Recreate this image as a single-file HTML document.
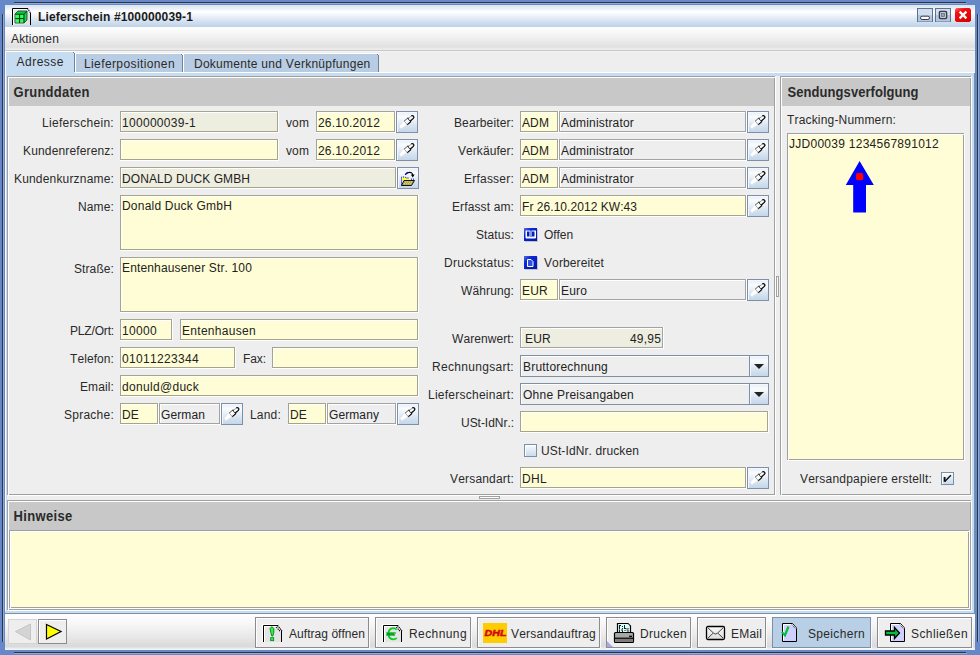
<!DOCTYPE html><html><head><meta charset="utf-8"><style>
html,body{margin:0;padding:0}
body{width:980px;height:655px;position:relative;overflow:hidden;background:#6687c8;font-family:"Liberation Sans",sans-serif}
.a{position:absolute}
.t{position:absolute;white-space:pre;font-family:"Liberation Sans",sans-serif;line-height:normal;font-kerning:none;font-variant-ligatures:none}
</style></head><body>
<div class=a style="left:0px;top:0px;width:980px;height:655px;background:#6687c8"></div>
<div class=a style="left:14px;top:3px;width:953px;height:1px;background:#8fa9dc"></div>
<div class=a style="left:3px;top:14px;width:1px;height:628px;background:#8fa9dc"></div>
<div class=a style="left:978px;top:14px;width:1px;height:628px;background:#8fa9dc"></div>
<div class=a style="left:14px;top:653px;width:953px;height:1px;background:#8fa9dc"></div>
<div class=a style="left:14px;top:2px;width:952px;height:1px;background:#2e3440"></div>
<div class=a style="left:2px;top:14px;width:1px;height:628px;background:#2e3440"></div>
<div class=a style="left:977px;top:14px;width:1px;height:628px;background:#2e3440"></div>
<div class=a style="left:14px;top:652px;width:952px;height:1px;background:#2e3440"></div>
<div class=a style="left:5px;top:5px;width:970px;height:22px;background:linear-gradient(#dae4ef 0px,#e6edf5 3px,#fbfcfe 6px,#ffffff 7px,#e8eff7 12px,#d2e0ef 17px,#bed2e9 22px)"></div>
<div class=t style="left:38.00px;top:10px;font-size:12px;font-weight:bold;letter-spacing:0.143px;color:#1b1b1b;">Lieferschein #100000039-1</div>
<div class=a style="left:5px;top:27px;width:970px;height:23px;background:linear-gradient(#ffffff 0px,#f8f8f8 5px,#ececec 13px,#e0e0e0 20px,#e6e6e6 21px,#f0f0f0 23px)"></div>
<div class=a style="left:5px;top:50px;width:970px;height:1px;background:#c6c6c6"></div>
<div class=t style="left:11.00px;top:32px;font-size:12px;font-weight:normal;letter-spacing:0.163px;color:#2a2a2a;">Aktionen</div>
<div class=a style="left:5px;top:51px;width:970px;height:563px;background:#eeeeee"></div>
<div class=a style="left:5px;top:51px;width:970px;height:1px;background:#f6f6f6"></div>
<div class=a style="left:5px;top:72px;width:970px;height:1px;background:#ffffff"></div>
<div class=a style="left:5px;top:73px;width:969px;height:3px;background:#c6dcf1"></div>
<div class=a style="left:5px;top:72px;width:1px;height:541px;background:#ffffff"></div>
<div class=a style="left:6px;top:73px;width:1px;height:540px;background:#c6dcf1"></div>
<div class=a style="left:972px;top:73px;width:2px;height:540px;background:#c6dcf1"></div>
<div class=a style="left:974px;top:73px;width:1px;height:541px;background:#7890a8"></div>
<div class=a style="left:5px;top:611px;width:969px;height:2px;background:#c6dcf1"></div>
<div class=a style="left:5px;top:613px;width:970px;height:1px;background:#7890a8"></div>
<div class=a style="left:5px;top:51px;width:70px;height:25px;background:#ffffff"></div>
<div class=a style="left:6px;top:52px;width:68px;height:24px;background:#c6dcf1"></div>
<div class=a style="left:74px;top:53px;width:1px;height:19px;background:#6f8197"></div>
<div class=a style="left:73px;top:52px;width:1px;height:1px;background:#6f8197"></div>
<div class=a style="left:74px;top:72px;width:1px;height:4px;background:#c6dcf1"></div>
<div class=t style="left:16.50px;top:55px;font-size:12px;font-weight:normal;letter-spacing:0.497px;color:#2a2a2a;">Adresse</div>
<div class=a style="left:75px;top:53px;width:107px;height:20px;background:#ffffff"></div>
<div class=a style="left:182px;top:72px;width:1px;height:1px;background:#ffffff"></div>
<div class=a style="left:76px;top:54px;width:106px;height:18px;background:#b8cde4"></div>
<div class=a style="left:182px;top:55px;width:1px;height:17px;background:#6f8197"></div>
<div class=a style="left:181px;top:54px;width:1px;height:1px;background:#6f8197"></div>
<div class=t style="left:84.00px;top:57px;font-size:12px;font-weight:normal;letter-spacing:0.392px;color:#2a2a2a;">Lieferpositionen</div>
<div class=a style="left:183px;top:53px;width:195px;height:20px;background:#ffffff"></div>
<div class=a style="left:378px;top:72px;width:1px;height:1px;background:#ffffff"></div>
<div class=a style="left:184px;top:54px;width:194px;height:18px;background:#b8cde4"></div>
<div class=a style="left:378px;top:55px;width:1px;height:17px;background:#6f8197"></div>
<div class=a style="left:377px;top:54px;width:1px;height:1px;background:#6f8197"></div>
<div class=t style="left:194.00px;top:57px;font-size:12px;font-weight:normal;letter-spacing:0.261px;color:#2a2a2a;">Dokumente und Verknüpfungen</div>
<div class=a style="left:7px;top:76px;width:768px;height:419px;border:1px solid #a0a0a0;box-sizing:border-box"></div>
<div class=a style="left:8px;top:77px;width:768px;height:419px;border:1px solid #fff;box-sizing:border-box"></div>
<div class=a style="left:7px;top:76px;width:768px;height:1px;background:#a0a0a0"></div>
<div class=a style="left:7px;top:76px;width:1px;height:419px;background:#a0a0a0"></div>
<div class=a style="left:9px;top:78px;width:765px;height:28px;background:#c8c8c8"></div>
<div class=t style="left:13.60px;top:85px;font-size:13px;font-weight:bold;letter-spacing:0.234px;color:#2a2a2a;transform:scaleY(1.1);transform-origin:0 12px">Grunddaten</div>
<div class=a style="left:780px;top:76px;width:191px;height:419px;border:1px solid #a0a0a0;box-sizing:border-box"></div>
<div class=a style="left:781px;top:77px;width:191px;height:419px;border:1px solid #fff;box-sizing:border-box"></div>
<div class=a style="left:780px;top:76px;width:191px;height:1px;background:#a0a0a0"></div>
<div class=a style="left:780px;top:76px;width:1px;height:419px;background:#a0a0a0"></div>
<div class=a style="left:782px;top:78px;width:188px;height:28px;background:#c8c8c8"></div>
<div class=t style="left:787.60px;top:85px;font-size:13px;font-weight:bold;letter-spacing:0.056px;color:#2a2a2a;transform:scaleY(1.1);transform-origin:0 12px">Sendungsverfolgung</div>
<div class=a style="left:479px;top:496px;width:21px;height:3px;border:1px solid #a0a0a0;box-sizing:border-box;background:#fff"></div>
<div class=a style="left:776px;top:276px;width:3px;height:21px;border:1px solid #a0a0a0;box-sizing:border-box;background:#f8f8f8"></div>
<div class=a style="left:7px;top:500px;width:964px;height:110px;border:1px solid #a0a0a0;box-sizing:border-box"></div>
<div class=a style="left:8px;top:501px;width:964px;height:110px;border:1px solid #fff;box-sizing:border-box"></div>
<div class=a style="left:7px;top:500px;width:964px;height:1px;background:#a0a0a0"></div>
<div class=a style="left:7px;top:500px;width:1px;height:110px;background:#a0a0a0"></div>
<div class=a style="left:9px;top:502px;width:961px;height:28px;background:#c8c8c8"></div>
<div class=t style="left:13.60px;top:509px;font-size:13px;font-weight:bold;letter-spacing:0.331px;color:#2a2a2a;transform:scaleY(1.1);transform-origin:0 12px">Hinweise</div>
<div class=a style="left:9px;top:530px;width:960px;height:78px;border:1px solid #a0a0a0;box-sizing:border-box"></div>
<div class=a style="left:10px;top:531px;width:960px;height:78px;border:1px solid #fff;box-sizing:border-box"></div>
<div class=a style="left:9px;top:530px;width:960px;height:1px;background:#a0a0a0"></div>
<div class=a style="left:9px;top:530px;width:1px;height:78px;background:#a0a0a0"></div>
<div class=a style="left:11px;top:532px;width:957px;height:75px;background:#fffdd6"></div>
<div class=t style="left:42.00px;top:116px;font-size:12px;font-weight:normal;letter-spacing:0.305px;color:#2a2a2a;">Lieferschein:</div>
<div class=t style="left:23.00px;top:144px;font-size:12px;font-weight:normal;letter-spacing:0.151px;color:#2a2a2a;">Kundenreferenz:</div>
<div class=t style="left:14.00px;top:172px;font-size:12px;font-weight:normal;letter-spacing:0.174px;color:#2a2a2a;">Kundenkurzname:</div>
<div class=t style="left:78.00px;top:200px;font-size:12px;font-weight:normal;letter-spacing:0.131px;color:#2a2a2a;">Name:</div>
<div class=t style="left:74.00px;top:262px;font-size:12px;font-weight:normal;letter-spacing:0.093px;color:#2a2a2a;">Straße:</div>
<div class=t style="left:70.00px;top:324px;font-size:12px;font-weight:normal;letter-spacing:-0.167px;color:#2a2a2a;">PLZ/Ort:</div>
<div class=t style="left:70.00px;top:352px;font-size:12px;font-weight:normal;letter-spacing:0.080px;color:#2a2a2a;">Telefon:</div>
<div class=t style="left:80.00px;top:380px;font-size:12px;font-weight:normal;letter-spacing:0.110px;color:#2a2a2a;">Email:</div>
<div class=t style="left:64.00px;top:408px;font-size:12px;font-weight:normal;letter-spacing:0.246px;color:#2a2a2a;">Sprache:</div>
<div class=a style="left:120px;top:111px;width:159px;height:22px;background:#fff"></div>
<div class=a style="left:120px;top:111px;width:158px;height:21px;background:#eeeee0;border:1px solid #a5a58f;box-sizing:border-box;box-shadow:inset 1px 1px 0 #fff"></div>
<div class=t style="left:122.00px;top:116px;font-size:12px;font-weight:normal;letter-spacing:0.297px;color:#222;">100000039-1</div>
<div class=t style="left:286.00px;top:116px;font-size:12px;font-weight:normal;letter-spacing:0.110px;color:#2a2a2a;">vom</div>
<div class=a style="left:316px;top:111px;width:80px;height:22px;background:#fff"></div>
<div class=a style="left:316px;top:111px;width:79px;height:21px;background:#fffdd6;border:1px solid #a5a58f;box-sizing:border-box;box-shadow:inset 1px 1px 0 #fff"></div>
<div class=t style="left:318.00px;top:116px;font-size:12px;font-weight:normal;letter-spacing:0.194px;color:#222;">26.10.2012</div>
<div class=a style="left:396px;top:111px;width:22px;height:22px;box-sizing:border-box;border:1px solid #7d90a9;background:linear-gradient(#e6eef7,#fafcfe 25%,#dde8f3 60%,#c3d6ea);box-shadow:inset 1px 1px 0 #f4f8fc"><svg width="22" height="22" viewBox="0 0 22 22" style="position:absolute;left:-1px;top:-1px">
<g transform="translate(4.2,16.6) rotate(-40.7)">
<path d="M0 -1.4 L7 -2.3 L7 2.3 L0 1.4 Z" fill="#fff"/>
<path d="M0.5 1.4 L7 2.3" stroke="#dcdcdc" stroke-width="0.6"/>
<rect x="7" y="-2.3" width="5" height="4.6" fill="#fcfcfc"/>
<path d="M7 -2.3 L12 -2.3" stroke="#555" stroke-width="0.9"/>
<path d="M7 2.4 L12 2.4" stroke="#000" stroke-width="1.2"/>
<path d="M7.3 -2.3 L7.3 2.3" stroke="#9a9a9a" stroke-width="0.8"/>
<path d="M12 -2.5 L12 2.5" stroke="#000" stroke-width="1.2"/>
<path d="M12 -1.6 L16 -1.6 Q17.5 -1.6 17.5 0 Q17.5 1.6 16 1.6 L12 1.6 Z" fill="#e6e6e6"/>
<rect x="12.5" y="-1" width="3.5" height="1.4" fill="#fff"/>
<path d="M12 -1.6 L16 -1.6" stroke="#333" stroke-width="0.9" stroke-dasharray="1 0.7"/>
<path d="M12 1.6 L16 1.6 Q17.5 1.6 17.5 0 Q17.5 -1.6 16 -1.6" fill="none" stroke="#000" stroke-width="1.2"/>
</g></svg></div>
<div class=a style="left:120px;top:139px;width:159px;height:22px;background:#fff"></div>
<div class=a style="left:120px;top:139px;width:158px;height:21px;background:#fffdd6;border:1px solid #a5a58f;box-sizing:border-box;box-shadow:inset 1px 1px 0 #fff"></div>
<div class=t style="left:286.00px;top:144px;font-size:12px;font-weight:normal;letter-spacing:0.110px;color:#2a2a2a;">vom</div>
<div class=a style="left:316px;top:139px;width:80px;height:22px;background:#fff"></div>
<div class=a style="left:316px;top:139px;width:79px;height:21px;background:#fffdd6;border:1px solid #a5a58f;box-sizing:border-box;box-shadow:inset 1px 1px 0 #fff"></div>
<div class=t style="left:318.00px;top:144px;font-size:12px;font-weight:normal;letter-spacing:0.194px;color:#222;">26.10.2012</div>
<div class=a style="left:396px;top:139px;width:22px;height:22px;box-sizing:border-box;border:1px solid #7d90a9;background:linear-gradient(#e6eef7,#fafcfe 25%,#dde8f3 60%,#c3d6ea);box-shadow:inset 1px 1px 0 #f4f8fc"><svg width="22" height="22" viewBox="0 0 22 22" style="position:absolute;left:-1px;top:-1px">
<g transform="translate(4.2,16.6) rotate(-40.7)">
<path d="M0 -1.4 L7 -2.3 L7 2.3 L0 1.4 Z" fill="#fff"/>
<path d="M0.5 1.4 L7 2.3" stroke="#dcdcdc" stroke-width="0.6"/>
<rect x="7" y="-2.3" width="5" height="4.6" fill="#fcfcfc"/>
<path d="M7 -2.3 L12 -2.3" stroke="#555" stroke-width="0.9"/>
<path d="M7 2.4 L12 2.4" stroke="#000" stroke-width="1.2"/>
<path d="M7.3 -2.3 L7.3 2.3" stroke="#9a9a9a" stroke-width="0.8"/>
<path d="M12 -2.5 L12 2.5" stroke="#000" stroke-width="1.2"/>
<path d="M12 -1.6 L16 -1.6 Q17.5 -1.6 17.5 0 Q17.5 1.6 16 1.6 L12 1.6 Z" fill="#e6e6e6"/>
<rect x="12.5" y="-1" width="3.5" height="1.4" fill="#fff"/>
<path d="M12 -1.6 L16 -1.6" stroke="#333" stroke-width="0.9" stroke-dasharray="1 0.7"/>
<path d="M12 1.6 L16 1.6 Q17.5 1.6 17.5 0 Q17.5 -1.6 16 -1.6" fill="none" stroke="#000" stroke-width="1.2"/>
</g></svg></div>
<div class=a style="left:120px;top:167px;width:277px;height:22px;background:#fff"></div>
<div class=a style="left:120px;top:167px;width:276px;height:21px;background:#eeeee0;border:1px solid #a5a58f;box-sizing:border-box;box-shadow:inset 1px 1px 0 #fff"></div>
<div class=t style="left:122.00px;top:172px;font-size:12px;font-weight:normal;letter-spacing:0.083px;color:#222;">DONALD DUCK GMBH</div>
<div class=a style="left:397px;top:167px;width:22px;height:22px;box-sizing:border-box;border:1px solid #7d90a9;background:linear-gradient(#e6eef7,#fafcfe 25%,#dde8f3 60%,#c3d6ea);box-shadow:inset 1px 1px 0 #f4f8fc"><svg width="22" height="22" viewBox="0 0 22 22" style="position:absolute;left:-1px;top:-1px">
<path d="M8.2 7.8 Q10.5 4.6 14 5.6 Q15.6 6.2 15.8 8.2" fill="none" stroke="#000" stroke-width="1.1"/>
<path d="M8.2 7.8 Q9.4 5.9 11.2 5.4" fill="none" stroke="#0000e0" stroke-width="1.2"/>
<path d="M13.8 7.6 L17.6 7.6 L15.8 10.4 Z" fill="#000"/>
<path d="M4.5 10.2 L8.2 10.2 L9 11 L12 11 L12 13 L4.5 13 Z" fill="#ffff40"/>
<path d="M4.5 18.5 L4.5 10 L8.2 10 L9 11 L12 11" fill="none" stroke="#0000d0" stroke-width="1" stroke-dasharray="1.1 0.9"/>
<path d="M7 13.5 L17.5 13.5 L14.5 18.5 L4.5 18.5 Z" fill="#b0a858" stroke="#000" stroke-width="0.9"/>
<path d="M8 15 L15.5 15 M7 16.8 L14.5 16.8" stroke="#ffff80" stroke-width="0.7" stroke-dasharray="1 1"/>
<path d="M14 12.2 L17 12.2" stroke="#0000d0" stroke-width="1" stroke-dasharray="1 1"/>
</svg></div>
<div class=a style="left:120px;top:195px;width:299px;height:56px;background:#fff"></div>
<div class=a style="left:120px;top:195px;width:298px;height:55px;background:#fffdd6;border:1px solid #a5a58f;box-sizing:border-box;box-shadow:inset 1px 1px 0 #fff"></div>
<div class=t style="left:122.00px;top:199px;font-size:12px;font-weight:normal;letter-spacing:0.206px;color:#222;">Donald Duck GmbH</div>
<div class=a style="left:120px;top:257px;width:299px;height:56px;background:#fff"></div>
<div class=a style="left:120px;top:257px;width:298px;height:55px;background:#fffdd6;border:1px solid #a5a58f;box-sizing:border-box;box-shadow:inset 1px 1px 0 #fff"></div>
<div class=t style="left:122.00px;top:261px;font-size:12px;font-weight:normal;letter-spacing:0.147px;color:#222;">Entenhausener Str. 100</div>
<div class=a style="left:120px;top:319px;width:53px;height:22px;background:#fff"></div>
<div class=a style="left:120px;top:319px;width:52px;height:21px;background:#fffdd6;border:1px solid #a5a58f;box-sizing:border-box;box-shadow:inset 1px 1px 0 #fff"></div>
<div class=t style="left:122.00px;top:324px;font-size:12px;font-weight:normal;letter-spacing:0.326px;color:#222;">10000</div>
<div class=a style="left:180px;top:319px;width:239px;height:22px;background:#fff"></div>
<div class=a style="left:180px;top:319px;width:238px;height:21px;background:#fffdd6;border:1px solid #a5a58f;box-sizing:border-box;box-shadow:inset 1px 1px 0 #fff"></div>
<div class=t style="left:182.00px;top:324px;font-size:12px;font-weight:normal;letter-spacing:0.297px;color:#222;">Entenhausen</div>
<div class=a style="left:120px;top:347px;width:116px;height:22px;background:#fff"></div>
<div class=a style="left:120px;top:347px;width:115px;height:21px;background:#fffdd6;border:1px solid #a5a58f;box-sizing:border-box;box-shadow:inset 1px 1px 0 #fff"></div>
<div class=t style="left:122.00px;top:352px;font-size:12px;font-weight:normal;letter-spacing:0.326px;color:#222;">01011223344</div>
<div class=t style="left:243.00px;top:352px;font-size:12px;font-weight:normal;letter-spacing:-0.084px;color:#2a2a2a;">Fax:</div>
<div class=a style="left:272px;top:347px;width:147px;height:22px;background:#fff"></div>
<div class=a style="left:272px;top:347px;width:146px;height:21px;background:#fffdd6;border:1px solid #a5a58f;box-sizing:border-box;box-shadow:inset 1px 1px 0 #fff"></div>
<div class=a style="left:120px;top:375px;width:299px;height:22px;background:#fff"></div>
<div class=a style="left:120px;top:375px;width:298px;height:21px;background:#fffdd6;border:1px solid #a5a58f;box-sizing:border-box;box-shadow:inset 1px 1px 0 #fff"></div>
<div class=t style="left:122.00px;top:380px;font-size:12px;font-weight:normal;letter-spacing:0.312px;color:#222;">donuld@duck</div>
<div class=a style="left:120px;top:403px;width:39px;height:22px;background:#fff"></div>
<div class=a style="left:120px;top:403px;width:38px;height:21px;background:#fffdd6;border:1px solid #a5a58f;box-sizing:border-box;box-shadow:inset 1px 1px 0 #fff"></div>
<div class=t style="left:122.00px;top:408px;font-size:12px;font-weight:normal;letter-spacing:0.165px;color:#222;">DE</div>
<div class=a style="left:159px;top:403px;width:62px;height:22px;background:#fff"></div>
<div class=a style="left:159px;top:403px;width:61px;height:21px;background:#eeeeee;border:1px solid #a3a3a3;box-sizing:border-box;box-shadow:inset 1px 1px 0 #fff"></div>
<div class=t style="left:161.00px;top:408px;font-size:12px;font-weight:normal;letter-spacing:0.109px;color:#222;">German</div>
<div class=a style="left:221px;top:403px;width:22px;height:22px;box-sizing:border-box;border:1px solid #7d90a9;background:linear-gradient(#e6eef7,#fafcfe 25%,#dde8f3 60%,#c3d6ea);box-shadow:inset 1px 1px 0 #f4f8fc"><svg width="22" height="22" viewBox="0 0 22 22" style="position:absolute;left:-1px;top:-1px">
<g transform="translate(4.2,16.6) rotate(-40.7)">
<path d="M0 -1.4 L7 -2.3 L7 2.3 L0 1.4 Z" fill="#fff"/>
<path d="M0.5 1.4 L7 2.3" stroke="#dcdcdc" stroke-width="0.6"/>
<rect x="7" y="-2.3" width="5" height="4.6" fill="#fcfcfc"/>
<path d="M7 -2.3 L12 -2.3" stroke="#555" stroke-width="0.9"/>
<path d="M7 2.4 L12 2.4" stroke="#000" stroke-width="1.2"/>
<path d="M7.3 -2.3 L7.3 2.3" stroke="#9a9a9a" stroke-width="0.8"/>
<path d="M12 -2.5 L12 2.5" stroke="#000" stroke-width="1.2"/>
<path d="M12 -1.6 L16 -1.6 Q17.5 -1.6 17.5 0 Q17.5 1.6 16 1.6 L12 1.6 Z" fill="#e6e6e6"/>
<rect x="12.5" y="-1" width="3.5" height="1.4" fill="#fff"/>
<path d="M12 -1.6 L16 -1.6" stroke="#333" stroke-width="0.9" stroke-dasharray="1 0.7"/>
<path d="M12 1.6 L16 1.6 Q17.5 1.6 17.5 0 Q17.5 -1.6 16 -1.6" fill="none" stroke="#000" stroke-width="1.2"/>
</g></svg></div>
<div class=t style="left:250.00px;top:408px;font-size:12px;font-weight:normal;letter-spacing:0.194px;color:#2a2a2a;">Land:</div>
<div class=a style="left:288px;top:403px;width:39px;height:22px;background:#fff"></div>
<div class=a style="left:288px;top:403px;width:38px;height:21px;background:#fffdd6;border:1px solid #a5a58f;box-sizing:border-box;box-shadow:inset 1px 1px 0 #fff"></div>
<div class=t style="left:290.00px;top:408px;font-size:12px;font-weight:normal;letter-spacing:0.165px;color:#222;">DE</div>
<div class=a style="left:327px;top:403px;width:70px;height:22px;background:#fff"></div>
<div class=a style="left:327px;top:403px;width:69px;height:21px;background:#eeeeee;border:1px solid #a3a3a3;box-sizing:border-box;box-shadow:inset 1px 1px 0 #fff"></div>
<div class=t style="left:329.00px;top:408px;font-size:12px;font-weight:normal;letter-spacing:0.093px;color:#222;">Germany</div>
<div class=a style="left:397px;top:403px;width:22px;height:22px;box-sizing:border-box;border:1px solid #7d90a9;background:linear-gradient(#e6eef7,#fafcfe 25%,#dde8f3 60%,#c3d6ea);box-shadow:inset 1px 1px 0 #f4f8fc"><svg width="22" height="22" viewBox="0 0 22 22" style="position:absolute;left:-1px;top:-1px">
<g transform="translate(4.2,16.6) rotate(-40.7)">
<path d="M0 -1.4 L7 -2.3 L7 2.3 L0 1.4 Z" fill="#fff"/>
<path d="M0.5 1.4 L7 2.3" stroke="#dcdcdc" stroke-width="0.6"/>
<rect x="7" y="-2.3" width="5" height="4.6" fill="#fcfcfc"/>
<path d="M7 -2.3 L12 -2.3" stroke="#555" stroke-width="0.9"/>
<path d="M7 2.4 L12 2.4" stroke="#000" stroke-width="1.2"/>
<path d="M7.3 -2.3 L7.3 2.3" stroke="#9a9a9a" stroke-width="0.8"/>
<path d="M12 -2.5 L12 2.5" stroke="#000" stroke-width="1.2"/>
<path d="M12 -1.6 L16 -1.6 Q17.5 -1.6 17.5 0 Q17.5 1.6 16 1.6 L12 1.6 Z" fill="#e6e6e6"/>
<rect x="12.5" y="-1" width="3.5" height="1.4" fill="#fff"/>
<path d="M12 -1.6 L16 -1.6" stroke="#333" stroke-width="0.9" stroke-dasharray="1 0.7"/>
<path d="M12 1.6 L16 1.6 Q17.5 1.6 17.5 0 Q17.5 -1.6 16 -1.6" fill="none" stroke="#000" stroke-width="1.2"/>
</g></svg></div>
<div class=t style="left:454.00px;top:116px;font-size:12px;font-weight:normal;letter-spacing:0.118px;color:#2a2a2a;">Bearbeiter:</div>
<div class=t style="left:458.00px;top:144px;font-size:12px;font-weight:normal;letter-spacing:0.064px;color:#2a2a2a;">Verkäufer:</div>
<div class=t style="left:464.00px;top:172px;font-size:12px;font-weight:normal;letter-spacing:0.221px;color:#2a2a2a;">Erfasser:</div>
<div class=t style="left:452.00px;top:200px;font-size:12px;font-weight:normal;letter-spacing:0.120px;color:#2a2a2a;">Erfasst am:</div>
<div class=t style="left:476.00px;top:228px;font-size:12px;font-weight:normal;letter-spacing:0.092px;color:#2a2a2a;">Status:</div>
<div class=t style="left:444.00px;top:256px;font-size:12px;font-weight:normal;letter-spacing:0.276px;color:#2a2a2a;">Druckstatus:</div>
<div class=t style="left:461.00px;top:284px;font-size:12px;font-weight:normal;letter-spacing:0.122px;color:#2a2a2a;">Währung:</div>
<div class=t style="left:452.00px;top:332px;font-size:12px;font-weight:normal;letter-spacing:0.065px;color:#2a2a2a;">Warenwert:</div>
<div class=t style="left:432.00px;top:360px;font-size:12px;font-weight:normal;letter-spacing:0.304px;color:#2a2a2a;">Rechnungsart:</div>
<div class=t style="left:428.00px;top:388px;font-size:12px;font-weight:normal;letter-spacing:0.247px;color:#2a2a2a;">Lieferscheinart:</div>
<div class=t style="left:461.00px;top:416px;font-size:12px;font-weight:normal;letter-spacing:-0.034px;color:#2a2a2a;">USt-IdNr.:</div>
<div class=t style="left:450.00px;top:472px;font-size:12px;font-weight:normal;letter-spacing:0.179px;color:#2a2a2a;">Versandart:</div>
<div class=a style="left:520px;top:111px;width:39px;height:22px;background:#fff"></div>
<div class=a style="left:520px;top:111px;width:38px;height:21px;background:#fffdd6;border:1px solid #a5a58f;box-sizing:border-box;box-shadow:inset 1px 1px 0 #fff"></div>
<div class=t style="left:522.00px;top:116px;font-size:12px;font-weight:normal;letter-spacing:0.111px;color:#222;">ADM</div>
<div class=a style="left:559px;top:111px;width:188px;height:22px;background:#fff"></div>
<div class=a style="left:559px;top:111px;width:187px;height:21px;background:#eeeeee;border:1px solid #a3a3a3;box-sizing:border-box;box-shadow:inset 1px 1px 0 #fff"></div>
<div class=t style="left:561.00px;top:116px;font-size:12px;font-weight:normal;letter-spacing:0.178px;color:#222;">Administrator</div>
<div class=a style="left:747px;top:111px;width:22px;height:22px;box-sizing:border-box;border:1px solid #7d90a9;background:linear-gradient(#e6eef7,#fafcfe 25%,#dde8f3 60%,#c3d6ea);box-shadow:inset 1px 1px 0 #f4f8fc"><svg width="22" height="22" viewBox="0 0 22 22" style="position:absolute;left:-1px;top:-1px">
<g transform="translate(4.2,16.6) rotate(-40.7)">
<path d="M0 -1.4 L7 -2.3 L7 2.3 L0 1.4 Z" fill="#fff"/>
<path d="M0.5 1.4 L7 2.3" stroke="#dcdcdc" stroke-width="0.6"/>
<rect x="7" y="-2.3" width="5" height="4.6" fill="#fcfcfc"/>
<path d="M7 -2.3 L12 -2.3" stroke="#555" stroke-width="0.9"/>
<path d="M7 2.4 L12 2.4" stroke="#000" stroke-width="1.2"/>
<path d="M7.3 -2.3 L7.3 2.3" stroke="#9a9a9a" stroke-width="0.8"/>
<path d="M12 -2.5 L12 2.5" stroke="#000" stroke-width="1.2"/>
<path d="M12 -1.6 L16 -1.6 Q17.5 -1.6 17.5 0 Q17.5 1.6 16 1.6 L12 1.6 Z" fill="#e6e6e6"/>
<rect x="12.5" y="-1" width="3.5" height="1.4" fill="#fff"/>
<path d="M12 -1.6 L16 -1.6" stroke="#333" stroke-width="0.9" stroke-dasharray="1 0.7"/>
<path d="M12 1.6 L16 1.6 Q17.5 1.6 17.5 0 Q17.5 -1.6 16 -1.6" fill="none" stroke="#000" stroke-width="1.2"/>
</g></svg></div>
<div class=a style="left:520px;top:139px;width:39px;height:22px;background:#fff"></div>
<div class=a style="left:520px;top:139px;width:38px;height:21px;background:#fffdd6;border:1px solid #a5a58f;box-sizing:border-box;box-shadow:inset 1px 1px 0 #fff"></div>
<div class=t style="left:522.00px;top:144px;font-size:12px;font-weight:normal;letter-spacing:0.111px;color:#222;">ADM</div>
<div class=a style="left:559px;top:139px;width:188px;height:22px;background:#fff"></div>
<div class=a style="left:559px;top:139px;width:187px;height:21px;background:#eeeeee;border:1px solid #a3a3a3;box-sizing:border-box;box-shadow:inset 1px 1px 0 #fff"></div>
<div class=t style="left:561.00px;top:144px;font-size:12px;font-weight:normal;letter-spacing:0.178px;color:#222;">Administrator</div>
<div class=a style="left:747px;top:139px;width:22px;height:22px;box-sizing:border-box;border:1px solid #7d90a9;background:linear-gradient(#e6eef7,#fafcfe 25%,#dde8f3 60%,#c3d6ea);box-shadow:inset 1px 1px 0 #f4f8fc"><svg width="22" height="22" viewBox="0 0 22 22" style="position:absolute;left:-1px;top:-1px">
<g transform="translate(4.2,16.6) rotate(-40.7)">
<path d="M0 -1.4 L7 -2.3 L7 2.3 L0 1.4 Z" fill="#fff"/>
<path d="M0.5 1.4 L7 2.3" stroke="#dcdcdc" stroke-width="0.6"/>
<rect x="7" y="-2.3" width="5" height="4.6" fill="#fcfcfc"/>
<path d="M7 -2.3 L12 -2.3" stroke="#555" stroke-width="0.9"/>
<path d="M7 2.4 L12 2.4" stroke="#000" stroke-width="1.2"/>
<path d="M7.3 -2.3 L7.3 2.3" stroke="#9a9a9a" stroke-width="0.8"/>
<path d="M12 -2.5 L12 2.5" stroke="#000" stroke-width="1.2"/>
<path d="M12 -1.6 L16 -1.6 Q17.5 -1.6 17.5 0 Q17.5 1.6 16 1.6 L12 1.6 Z" fill="#e6e6e6"/>
<rect x="12.5" y="-1" width="3.5" height="1.4" fill="#fff"/>
<path d="M12 -1.6 L16 -1.6" stroke="#333" stroke-width="0.9" stroke-dasharray="1 0.7"/>
<path d="M12 1.6 L16 1.6 Q17.5 1.6 17.5 0 Q17.5 -1.6 16 -1.6" fill="none" stroke="#000" stroke-width="1.2"/>
</g></svg></div>
<div class=a style="left:520px;top:167px;width:39px;height:22px;background:#fff"></div>
<div class=a style="left:520px;top:167px;width:38px;height:21px;background:#fffdd6;border:1px solid #a5a58f;box-sizing:border-box;box-shadow:inset 1px 1px 0 #fff"></div>
<div class=t style="left:522.00px;top:172px;font-size:12px;font-weight:normal;letter-spacing:0.111px;color:#222;">ADM</div>
<div class=a style="left:559px;top:167px;width:188px;height:22px;background:#fff"></div>
<div class=a style="left:559px;top:167px;width:187px;height:21px;background:#eeeeee;border:1px solid #a3a3a3;box-sizing:border-box;box-shadow:inset 1px 1px 0 #fff"></div>
<div class=t style="left:561.00px;top:172px;font-size:12px;font-weight:normal;letter-spacing:0.178px;color:#222;">Administrator</div>
<div class=a style="left:747px;top:167px;width:22px;height:22px;box-sizing:border-box;border:1px solid #7d90a9;background:linear-gradient(#e6eef7,#fafcfe 25%,#dde8f3 60%,#c3d6ea);box-shadow:inset 1px 1px 0 #f4f8fc"><svg width="22" height="22" viewBox="0 0 22 22" style="position:absolute;left:-1px;top:-1px">
<g transform="translate(4.2,16.6) rotate(-40.7)">
<path d="M0 -1.4 L7 -2.3 L7 2.3 L0 1.4 Z" fill="#fff"/>
<path d="M0.5 1.4 L7 2.3" stroke="#dcdcdc" stroke-width="0.6"/>
<rect x="7" y="-2.3" width="5" height="4.6" fill="#fcfcfc"/>
<path d="M7 -2.3 L12 -2.3" stroke="#555" stroke-width="0.9"/>
<path d="M7 2.4 L12 2.4" stroke="#000" stroke-width="1.2"/>
<path d="M7.3 -2.3 L7.3 2.3" stroke="#9a9a9a" stroke-width="0.8"/>
<path d="M12 -2.5 L12 2.5" stroke="#000" stroke-width="1.2"/>
<path d="M12 -1.6 L16 -1.6 Q17.5 -1.6 17.5 0 Q17.5 1.6 16 1.6 L12 1.6 Z" fill="#e6e6e6"/>
<rect x="12.5" y="-1" width="3.5" height="1.4" fill="#fff"/>
<path d="M12 -1.6 L16 -1.6" stroke="#333" stroke-width="0.9" stroke-dasharray="1 0.7"/>
<path d="M12 1.6 L16 1.6 Q17.5 1.6 17.5 0 Q17.5 -1.6 16 -1.6" fill="none" stroke="#000" stroke-width="1.2"/>
</g></svg></div>
<div class=a style="left:520px;top:195px;width:227px;height:22px;background:#fff"></div>
<div class=a style="left:520px;top:195px;width:226px;height:21px;background:#fffdd6;border:1px solid #a5a58f;box-sizing:border-box;box-shadow:inset 1px 1px 0 #fff"></div>
<div class=t style="left:522.00px;top:200px;font-size:12px;font-weight:normal;letter-spacing:0.049px;color:#222;">Fr 26.10.2012 KW:43</div>
<div class=a style="left:747px;top:195px;width:22px;height:22px;box-sizing:border-box;border:1px solid #7d90a9;background:linear-gradient(#e6eef7,#fafcfe 25%,#dde8f3 60%,#c3d6ea);box-shadow:inset 1px 1px 0 #f4f8fc"><svg width="22" height="22" viewBox="0 0 22 22" style="position:absolute;left:-1px;top:-1px">
<g transform="translate(4.2,16.6) rotate(-40.7)">
<path d="M0 -1.4 L7 -2.3 L7 2.3 L0 1.4 Z" fill="#fff"/>
<path d="M0.5 1.4 L7 2.3" stroke="#dcdcdc" stroke-width="0.6"/>
<rect x="7" y="-2.3" width="5" height="4.6" fill="#fcfcfc"/>
<path d="M7 -2.3 L12 -2.3" stroke="#555" stroke-width="0.9"/>
<path d="M7 2.4 L12 2.4" stroke="#000" stroke-width="1.2"/>
<path d="M7.3 -2.3 L7.3 2.3" stroke="#9a9a9a" stroke-width="0.8"/>
<path d="M12 -2.5 L12 2.5" stroke="#000" stroke-width="1.2"/>
<path d="M12 -1.6 L16 -1.6 Q17.5 -1.6 17.5 0 Q17.5 1.6 16 1.6 L12 1.6 Z" fill="#e6e6e6"/>
<rect x="12.5" y="-1" width="3.5" height="1.4" fill="#fff"/>
<path d="M12 -1.6 L16 -1.6" stroke="#333" stroke-width="0.9" stroke-dasharray="1 0.7"/>
<path d="M12 1.6 L16 1.6 Q17.5 1.6 17.5 0 Q17.5 -1.6 16 -1.6" fill="none" stroke="#000" stroke-width="1.2"/>
</g></svg></div>
<div class=t style="left:544.00px;top:228px;font-size:12px;font-weight:normal;letter-spacing:-0.070px;color:#2a2a2a;">Offen</div>
<div class=t style="left:544.00px;top:256px;font-size:12px;font-weight:normal;letter-spacing:0.118px;color:#2a2a2a;">Vorbereitet</div>
<div class=a style="left:520px;top:279px;width:39px;height:22px;background:#fff"></div>
<div class=a style="left:520px;top:279px;width:38px;height:21px;background:#fffdd6;border:1px solid #a5a58f;box-sizing:border-box;box-shadow:inset 1px 1px 0 #fff"></div>
<div class=t style="left:522.00px;top:284px;font-size:12px;font-weight:normal;letter-spacing:0.221px;color:#222;">EUR</div>
<div class=a style="left:559px;top:279px;width:188px;height:22px;background:#fff"></div>
<div class=a style="left:559px;top:279px;width:187px;height:21px;background:#eeeeee;border:1px solid #a3a3a3;box-sizing:border-box;box-shadow:inset 1px 1px 0 #fff"></div>
<div class=t style="left:561.00px;top:284px;font-size:12px;font-weight:normal;letter-spacing:0.163px;color:#222;">Euro</div>
<div class=a style="left:747px;top:279px;width:22px;height:22px;box-sizing:border-box;border:1px solid #7d90a9;background:linear-gradient(#e6eef7,#fafcfe 25%,#dde8f3 60%,#c3d6ea);box-shadow:inset 1px 1px 0 #f4f8fc"><svg width="22" height="22" viewBox="0 0 22 22" style="position:absolute;left:-1px;top:-1px">
<g transform="translate(4.2,16.6) rotate(-40.7)">
<path d="M0 -1.4 L7 -2.3 L7 2.3 L0 1.4 Z" fill="#fff"/>
<path d="M0.5 1.4 L7 2.3" stroke="#dcdcdc" stroke-width="0.6"/>
<rect x="7" y="-2.3" width="5" height="4.6" fill="#fcfcfc"/>
<path d="M7 -2.3 L12 -2.3" stroke="#555" stroke-width="0.9"/>
<path d="M7 2.4 L12 2.4" stroke="#000" stroke-width="1.2"/>
<path d="M7.3 -2.3 L7.3 2.3" stroke="#9a9a9a" stroke-width="0.8"/>
<path d="M12 -2.5 L12 2.5" stroke="#000" stroke-width="1.2"/>
<path d="M12 -1.6 L16 -1.6 Q17.5 -1.6 17.5 0 Q17.5 1.6 16 1.6 L12 1.6 Z" fill="#e6e6e6"/>
<rect x="12.5" y="-1" width="3.5" height="1.4" fill="#fff"/>
<path d="M12 -1.6 L16 -1.6" stroke="#333" stroke-width="0.9" stroke-dasharray="1 0.7"/>
<path d="M12 1.6 L16 1.6 Q17.5 1.6 17.5 0 Q17.5 -1.6 16 -1.6" fill="none" stroke="#000" stroke-width="1.2"/>
</g></svg></div>
<div class=a style="left:520px;top:327px;width:144px;height:22px;background:#fff"></div>
<div class=a style="left:520px;top:327px;width:143px;height:21px;background:#eeeee0;border:1px solid #a3a3a3;box-sizing:border-box;box-shadow:inset 1px 1px 0 #fff"></div>
<div class=t style="left:525.00px;top:332px;font-size:12px;font-weight:normal;letter-spacing:0.221px;color:#222;">EUR</div>
<div class=t style="left:630.00px;top:332px;font-size:12px;font-weight:normal;letter-spacing:0.194px;color:#222;">49,95</div>
<div class=a style="left:520px;top:355px;width:249px;height:22px;background:#eeeeee;border:1px solid #7d90a9;box-sizing:border-box;box-shadow:inset 1px 1px 0 #fff"></div>
<div class=a style="left:749px;top:355px;width:20px;height:22px;box-sizing:border-box;border:1px solid #7d90a9;background:linear-gradient(#e6eef7,#fafcfe 25%,#dde8f3 60%,#c3d6ea);box-shadow:inset 1px 1px 0 #f4f8fc"></div>
<svg class=a style="left:749px;top:355px" width="20" height="22"><path d="M5 9 L15 9 L10 14 Z" fill="#222"/></svg>
<div class=t style="left:523.00px;top:360px;font-size:12px;font-weight:normal;letter-spacing:0.210px;color:#222;">Bruttorechnung</div>
<div class=a style="left:520px;top:383px;width:249px;height:22px;background:#eeeeee;border:1px solid #7d90a9;box-sizing:border-box;box-shadow:inset 1px 1px 0 #fff"></div>
<div class=a style="left:749px;top:383px;width:20px;height:22px;box-sizing:border-box;border:1px solid #7d90a9;background:linear-gradient(#e6eef7,#fafcfe 25%,#dde8f3 60%,#c3d6ea);box-shadow:inset 1px 1px 0 #f4f8fc"></div>
<svg class=a style="left:749px;top:383px" width="20" height="22"><path d="M5 9 L15 9 L10 14 Z" fill="#222"/></svg>
<div class=t style="left:523.00px;top:388px;font-size:12px;font-weight:normal;letter-spacing:0.250px;color:#222;">Ohne Preisangaben</div>
<div class=a style="left:520px;top:411px;width:249px;height:22px;background:#fff"></div>
<div class=a style="left:520px;top:411px;width:248px;height:21px;background:#fffdd6;border:1px solid #a5a58f;box-sizing:border-box;box-shadow:inset 1px 1px 0 #fff"></div>
<div class=a style="left:524px;top:444px;width:13px;height:13px;box-sizing:border-box;border:1px solid #7890a8;background:linear-gradient(#f8fbfd,#cadbec);box-shadow:inset 1px 1px 0 #fff"></div>
<div class=t style="left:541.00px;top:444px;font-size:12px;font-weight:normal;letter-spacing:0.116px;color:#2a2a2a;">USt-IdNr. drucken</div>
<div class=a style="left:520px;top:467px;width:227px;height:22px;background:#fff"></div>
<div class=a style="left:520px;top:467px;width:226px;height:21px;background:#fffdd6;border:1px solid #a5a58f;box-sizing:border-box;box-shadow:inset 1px 1px 0 #fff"></div>
<div class=t style="left:522.00px;top:472px;font-size:12px;font-weight:normal;letter-spacing:0.331px;color:#222;">DHL</div>
<div class=a style="left:747px;top:467px;width:22px;height:22px;box-sizing:border-box;border:1px solid #7d90a9;background:linear-gradient(#e6eef7,#fafcfe 25%,#dde8f3 60%,#c3d6ea);box-shadow:inset 1px 1px 0 #f4f8fc"><svg width="22" height="22" viewBox="0 0 22 22" style="position:absolute;left:-1px;top:-1px">
<g transform="translate(4.2,16.6) rotate(-40.7)">
<path d="M0 -1.4 L7 -2.3 L7 2.3 L0 1.4 Z" fill="#fff"/>
<path d="M0.5 1.4 L7 2.3" stroke="#dcdcdc" stroke-width="0.6"/>
<rect x="7" y="-2.3" width="5" height="4.6" fill="#fcfcfc"/>
<path d="M7 -2.3 L12 -2.3" stroke="#555" stroke-width="0.9"/>
<path d="M7 2.4 L12 2.4" stroke="#000" stroke-width="1.2"/>
<path d="M7.3 -2.3 L7.3 2.3" stroke="#9a9a9a" stroke-width="0.8"/>
<path d="M12 -2.5 L12 2.5" stroke="#000" stroke-width="1.2"/>
<path d="M12 -1.6 L16 -1.6 Q17.5 -1.6 17.5 0 Q17.5 1.6 16 1.6 L12 1.6 Z" fill="#e6e6e6"/>
<rect x="12.5" y="-1" width="3.5" height="1.4" fill="#fff"/>
<path d="M12 -1.6 L16 -1.6" stroke="#333" stroke-width="0.9" stroke-dasharray="1 0.7"/>
<path d="M12 1.6 L16 1.6 Q17.5 1.6 17.5 0 Q17.5 -1.6 16 -1.6" fill="none" stroke="#000" stroke-width="1.2"/>
</g></svg></div>
<div class=t style="left:787.00px;top:113px;font-size:12px;font-weight:normal;letter-spacing:0.175px;color:#2a2a2a;">Tracking-Nummern:</div>
<div class=a style="left:787px;top:133px;width:177px;height:327px;border:1px solid #a0a0a0;box-sizing:border-box"></div>
<div class=a style="left:788px;top:134px;width:177px;height:327px;border:1px solid #fff;box-sizing:border-box"></div>
<div class=a style="left:787px;top:133px;width:177px;height:1px;background:#a0a0a0"></div>
<div class=a style="left:787px;top:133px;width:1px;height:327px;background:#a0a0a0"></div>
<div class=a style="left:789px;top:135px;width:174px;height:324px;background:#fffdd6"></div>
<div class=t style="left:789.00px;top:137px;font-size:12px;font-weight:normal;letter-spacing:0.267px;color:#222;">JJD00039 1234567891012</div>
<svg class=a style="left:840px;top:155px" width="40" height="65"><path d="M19.6 6 L33.8 30 L26 30 L26 57.5 L13.2 57.5 L13.2 30 L5.8 30 Z" fill="#0000ff"/><rect x="16" y="18" width="7.3" height="7.2" rx="2" fill="#ff0000"/></svg>
<div class=t style="left:800.00px;top:472px;font-size:12px;font-weight:normal;letter-spacing:0.219px;color:#2a2a2a;">Versandpapiere erstellt:</div>
<div class=a style="left:941px;top:472px;width:13px;height:13px;box-sizing:border-box;border:1px solid #7890a8;background:linear-gradient(#f8fbfd,#cadbec);box-shadow:inset 1px 1px 0 #fff"></div>
<svg class=a style="left:941px;top:472px" width="13" height="13"><path d="M3.6 5 L3.6 9.8" stroke="#111" stroke-width="1.9"/><path d="M3.8 9.6 L9.9 3.3" stroke="#111" stroke-width="1.4"/></svg>
<div class=a style="left:5px;top:614px;width:970px;height:36px;background:linear-gradient(#ffffff 0px,#f7f7f7 10px,#e9e9e9 22px,#dadada 32px,#dcdcdc 33px,#f2f2f2 35px,#f6f6f6 36px)"></div>
<div class=a style="left:8px;top:619px;width:29px;height:25px;box-sizing:border-box;border:1px solid #d4d4d4;background:#eeeeee"></div>
<svg class=a style="left:8px;top:619px" width="29" height="25"><path d="M7.5 12.5 L22.5 5 L22.5 21 Z" fill="#d4d4d4" stroke="#c4c4c4"/></svg>
<div class=a style="left:38px;top:619px;width:29px;height:25px;box-sizing:border-box;border:1px solid #8c8c8c;background:#eeeeee;box-shadow:inset 1px 1px 0 #fff"></div>
<svg class=a style="left:38px;top:619px" width="29" height="25"><path d="M8.5 5.5 L23 12.5 L8.5 20 Z" fill="#ffff00" stroke="#000" stroke-width="1.2"/></svg>
<div class=a style="left:255px;top:617px;width:115px;height:32px;background:#fafafa"></div>
<div class=a style="left:255px;top:617px;width:114px;height:31px;box-sizing:border-box;border:1px solid #8c8c8c;background:#eeeeee;box-shadow:inset 1px 1px 0 #fff"></div>

<div class=t style="left:289.00px;top:627px;font-size:12px;font-weight:normal;letter-spacing:0.044px;color:#2a2a2a;">Auftrag öffnen</div>
<div class=a style="left:375px;top:617px;width:97px;height:32px;background:#fafafa"></div>
<div class=a style="left:375px;top:617px;width:96px;height:31px;box-sizing:border-box;border:1px solid #8c8c8c;background:#eeeeee;box-shadow:inset 1px 1px 0 #fff"></div>

<div class=t style="left:409.00px;top:627px;font-size:12px;font-weight:normal;letter-spacing:0.411px;color:#2a2a2a;">Rechnung</div>
<div class=a style="left:477px;top:617px;width:124px;height:32px;background:#fafafa"></div>
<div class=a style="left:477px;top:617px;width:123px;height:31px;box-sizing:border-box;border:1px solid #8c8c8c;background:#eeeeee;box-shadow:inset 1px 1px 0 #fff"></div>

<div class=t style="left:511.00px;top:627px;font-size:12px;font-weight:normal;letter-spacing:0.210px;color:#2a2a2a;">Versandauftrag</div>
<div class=a style="left:606px;top:617px;width:86px;height:32px;background:#fafafa"></div>
<div class=a style="left:606px;top:617px;width:85px;height:31px;box-sizing:border-box;border:1px solid #8c8c8c;background:#eeeeee;box-shadow:inset 1px 1px 0 #fff"></div>

<div class=t style="left:640.00px;top:627px;font-size:12px;font-weight:normal;letter-spacing:0.331px;color:#2a2a2a;">Drucken</div>
<div class=a style="left:697px;top:617px;width:70px;height:32px;background:#fafafa"></div>
<div class=a style="left:697px;top:617px;width:69px;height:31px;box-sizing:border-box;border:1px solid #8c8c8c;background:#eeeeee;box-shadow:inset 1px 1px 0 #fff"></div>

<div class=t style="left:731.00px;top:627px;font-size:12px;font-weight:normal;letter-spacing:0.199px;color:#2a2a2a;">EMail</div>
<div class=a style="left:772px;top:617px;width:100px;height:32px;background:#fafafa"></div>
<div class=a style="left:772px;top:617px;width:99px;height:31px;box-sizing:border-box;border:1px solid #7c90ac;background:#b8cfe6"></div>

<div class=t style="left:808.00px;top:627px;font-size:12px;font-weight:normal;letter-spacing:0.329px;color:#2a2a2a;">Speichern</div>
<div class=a style="left:877px;top:617px;width:96px;height:32px;background:#fafafa"></div>
<div class=a style="left:877px;top:617px;width:95px;height:31px;box-sizing:border-box;border:1px solid #8c8c8c;background:#eeeeee;box-shadow:inset 1px 1px 0 #fff"></div>

<div class=t style="left:911.00px;top:627px;font-size:12px;font-weight:normal;letter-spacing:0.404px;color:#2a2a2a;">Schließen</div>
<svg class=a style="left:11px;top:7px" width="21" height="19" viewBox="0 0 21 19">
<path d="M1 1 L17 1 L20 6 L20 18 L1 18 Z" fill="#e2e2e2"/>
<path d="M2.5 18 L2.5 2.5 L16.5 2.5" fill="none" stroke="#fff" stroke-width="1"/>
<path d="M1.5 18 L1.5 1.5 L17 1.5" fill="none" stroke="#000" stroke-width="1"/>
<path d="M19.5 6 L19.5 18" fill="none" stroke="#000" stroke-width="1"/>
<path d="M16.5 1.5 L19.8 6.5" stroke="#000" stroke-width="1.1" stroke-dasharray="1.2 0.8"/>
<path d="M15.8 2.8 L18.8 7" stroke="#fff" stroke-width="0.8"/>
<path d="M4 7 L7 4 L16 4 L16 13 L13 16 L4 16 Z" fill="#00e040" stroke="#402840" stroke-width="0.8"/>
<path d="M4.5 7.5 L12.5 7.5 L12.5 15.5 L4.5 15.5 Z" fill="#30ff60"/>
<path d="M4.3 7.2 L13 7.2 L16 4.2 M13 7.2 L13 16 M4.3 11.6 L13 11.6 M8.6 7.2 L8.6 16" fill="none" stroke="#103010" stroke-width="1"/>
<path d="M7.5 5.6 L14 5.6" stroke="#00b030" stroke-width="0.7" stroke-dasharray="1 1"/>
</svg>
<svg class=a style="left:917px;top:8px" width="16" height="14" viewBox="0 0 16 14">
<rect x="0.5" y="0.5" width="15" height="13" fill="#c4d5e8" stroke="#5d7190"/>
<rect x="1" y="1" width="14" height="6" fill="#d0deed"/>
<rect x="1" y="7" width="14" height="6.5" fill="#b3c8df"/>
<rect x="3.5" y="8.2" width="9" height="3.3" rx="1.6" fill="#fff" stroke="#3a3a48" stroke-width="1"/>
</svg>
<svg class=a style="left:935px;top:8px" width="16" height="14" viewBox="0 0 16 14">
<rect x="0.5" y="0.5" width="15" height="13" fill="#c4d5e8" stroke="#5d7190"/>
<rect x="1" y="1" width="14" height="6" fill="#d0deed"/>
<rect x="1" y="7" width="14" height="6.5" fill="#b3c8df"/>
<rect x="4.5" y="3.5" width="7" height="7" rx="1" fill="#fff" stroke="#3a3a48" stroke-width="1.6"/>
<rect x="6.5" y="5.5" width="3" height="3" fill="#90a8c8" stroke="#5a6a80" stroke-width="0.8"/>
</svg>
<svg class=a style="left:955px;top:8px" width="16" height="14" viewBox="0 0 16 14">
<defs><linearGradient id="rg" x1="0" y1="0" x2="0.6" y2="1"><stop offset="0" stop-color="#ff6a6a"/><stop offset="0.3" stop-color="#f01414"/><stop offset="1" stop-color="#e00000"/></linearGradient></defs>
<path d="M1.5 0 L14.5 0 L16 1.5 L16 12.5 L14.5 14 L1.5 14 L0 12.5 L0 1.5 Z" fill="url(#rg)"/>
<path d="M4.6 3.6 L11.4 10.4 M11.4 3.6 L4.6 10.4" stroke="#fff" stroke-width="2.2"/>
</svg>
<svg class=a style="left:522px;top:226px" width="18" height="18" viewBox="0 0 18 18">
<defs><linearGradient id="sb" x1="0" y1="0" x2="1" y2="1"><stop offset="0" stop-color="#5a70e0"/><stop offset="0.3" stop-color="#0a28d8"/><stop offset="1" stop-color="#0018a8"/></linearGradient></defs>
<rect x="3" y="3" width="13" height="13" fill="#000" opacity="0.18"/>
<rect x="2" y="2" width="13" height="13" fill="url(#sb)"/>
<path d="M3.5 4.5 L8.5 4.5 L8.5 12 L3.5 12 Z M9.5 4.5 L14 4.5 L14 12 L9.5 12 Z" fill="#fff"/>
<rect x="5" y="5.5" width="2.5" height="5" fill="#0020b8"/>
<rect x="10" y="5.5" width="2.5" height="5" fill="#0020b8"/>
<rect x="4" y="11" width="9.5" height="1.5" fill="#fff"/>
</svg>
<svg class=a style="left:522px;top:254px" width="18" height="18" viewBox="0 0 18 18">
<rect x="3" y="3" width="13" height="13" fill="#000" opacity="0.18"/>
<rect x="2" y="2" width="13" height="13" fill="url(#sb)"/>
<path d="M5.5 5.5 L9 5.5 L11 7.5 L11 12.5 L5.5 12.5 Z" fill="#3050d8" stroke="#fff" stroke-width="1"/>
</svg>
<svg class=a style="left:262px;top:624px" width="21" height="18" viewBox="0 0 21 18"><path d="M2 2 L15 2 L19 6.5 L19 18 L2 18 Z" fill="#e4e4e4"/>
<path d="M0.5 18 L0.5 0.5 L16 0.5" fill="none" stroke="#fff" stroke-width="1"/>
<path d="M2.5 18 L2.5 2.5 L14.5 2.5" fill="none" stroke="#fff" stroke-width="1"/>
<path d="M1.5 18 L1.5 1.5 L16 1.5" fill="none" stroke="#000" stroke-width="1"/>
<path d="M19.5 6.5 L19.5 18" fill="none" stroke="#000" stroke-width="1"/>
<path d="M15 2.5 L19 7" stroke="#fff" stroke-width="2"/>
<path d="M15.5 1.5 L20 6.8" stroke="#000" stroke-width="1.2" stroke-dasharray="1.3 0.7"/>
<path d="M14.3 3 L18.5 7.6" stroke="#000" stroke-width="1.1" stroke-dasharray="1.3 0.8"/>
<path d="M9.8 2.6 L11.8 4.6 L11.8 8.6 L10.8 12 L9.8 12 L8.8 8.6 L8 4.6 Z" fill="#30f040" stroke="#008020" stroke-width="0.9"/>
<rect x="8.7" y="13.7" width="3" height="3" fill="#30f040" stroke="#008020" stroke-width="0.8"/></svg>
<svg class=a style="left:382px;top:624px" width="21" height="18" viewBox="0 0 21 18"><path d="M2 2 L15 2 L19 6.5 L19 18 L2 18 Z" fill="#e4e4e4"/>
<path d="M0.5 18 L0.5 0.5 L16 0.5" fill="none" stroke="#fff" stroke-width="1"/>
<path d="M2.5 18 L2.5 2.5 L14.5 2.5" fill="none" stroke="#fff" stroke-width="1"/>
<path d="M1.5 18 L1.5 1.5 L16 1.5" fill="none" stroke="#000" stroke-width="1"/>
<path d="M19.5 6.5 L19.5 18" fill="none" stroke="#000" stroke-width="1"/>
<path d="M15 2.5 L19 7" stroke="#fff" stroke-width="2"/>
<path d="M15.5 1.5 L20 6.8" stroke="#000" stroke-width="1.2" stroke-dasharray="1.3 0.7"/>
<path d="M14.3 3 L18.5 7.6" stroke="#000" stroke-width="1.1" stroke-dasharray="1.3 0.8"/>
<path d="M14.6 5.6 Q13.2 4.2 11.2 4.2 Q6.6 4.6 6.4 9.9 Q6.6 15 11.2 15.4 Q13.4 15.4 14.8 14" fill="none" stroke="#00d020" stroke-width="1.7"/>
<path d="M4.2 9 L13.8 9" stroke="#00c020" stroke-width="1.5"/><path d="M4.2 11 L13 11" stroke="#00b020" stroke-width="1.5"/><path d="M5 10 L12 10" stroke="#006010" stroke-width="0.9"/></svg>
<svg class=a style="left:483px;top:623px" width="24" height="20" viewBox="0 0 24 20"><rect x="0" y="0" width="24" height="20" fill="#ffcc00"/>
<text x="1.6" y="12.7" textLength="22" lengthAdjust="spacingAndGlyphs" font-family="Liberation Sans" font-weight="bold" font-style="italic" font-size="9.2" fill="#d40511" stroke="#d40511" stroke-width="0.5">DHL</text>
</svg>
<svg class=a style="left:613px;top:622px" width="22" height="22" viewBox="0 0 22 22">
<path d="M4.5 1.5 L15 1.5 L17.5 4 L17.5 11 L4.5 11 Z" fill="#d8ffff" stroke="#000" stroke-width="1.2"/>
<circle cx="15.6" cy="3.2" r="0.8" fill="#fff"/>
<g fill="#202020">
<rect x="6" y="3" width="1" height="4"/><rect x="7" y="3" width="1" height="1"/>
<rect x="9" y="4" width="1" height="1"/><rect x="9" y="6" width="1" height="1"/>
<rect x="11" y="3" width="1" height="4"/><rect x="12" y="6" width="1.5" height="1"/>
<rect x="14.5" y="6" width="1" height="1"/>
<rect x="6" y="7.5" width="1" height="3"/>
<rect x="8" y="7.5" width="2" height="1"/><rect x="9" y="8.5" width="1" height="2"/>
<rect x="11.5" y="8" width="1" height="1"/><rect x="11.5" y="10" width="1" height="0.8"/>
<rect x="13.5" y="7.5" width="2" height="1"/><rect x="14.5" y="8.5" width="1" height="2"/>
</g>
<rect x="1.5" y="10.5" width="19" height="10" rx="1" fill="#a8a8a8" stroke="#000" stroke-width="1.2"/>
<rect x="2.2" y="16.5" width="17.6" height="3.4" fill="#7c7c7c"/>
<path d="M1.5 16.2 L20.5 16.2" stroke="#000" stroke-width="1.2"/>
<path d="M16 14.3 L19 14.3" stroke="#000" stroke-width="1.2"/>
</svg>
<svg class=a style="left:607px;top:641px" width="7" height="6" viewBox="0 0 7 6"><path d="M0 0 L0 6 L6 6 Z" fill="#a8a8f0"/></svg>
<svg class=a style="left:705px;top:625px" width="21" height="16" viewBox="0 0 21 16">
<defs><linearGradient id="eg" x1="0" y1="0" x2="0" y2="1"><stop offset="0" stop-color="#fafafa"/><stop offset="1" stop-color="#dcdcdc"/></linearGradient></defs>
<rect x="1.5" y="1.5" width="18" height="13" rx="1.5" fill="url(#eg)" stroke="#000" stroke-width="1.3"/>
<path d="M3 3 L9 8.5 Q10.5 9.5 12 8.5 L18 3 M3 13 L8 8.3 M18 13 L13 8.3" fill="none" stroke="#333" stroke-width="0.9"/>
</svg>
<svg class=a style="left:781px;top:622px" width="18" height="21" viewBox="0 0 18 21"><path d="M1.5 19.5 L1.5 1.5 L11.5 1.5 L15.5 6 L15.5 19.5 Z" fill="#d0d0ff" stroke="#000" stroke-width="1"/>
<path d="M2.5 18.5 L2.5 2.5 L11 2.5" fill="none" stroke="#fff" stroke-width="1"/>
<path d="M11 2.2 L15 6.6" stroke="#fff" stroke-width="1"/>
<path d="M10.8 2.6 L15 7.2" stroke="#000" stroke-width="0.8" stroke-dasharray="1 0.9"/>
<path d="M0.8 10 L4 13.2 L7.5 4.5" fill="none" stroke="#00c040" stroke-width="2.2"/>
</svg>
<svg class=a style="left:884px;top:622px" width="23" height="21" viewBox="0 0 23 21"><path d="M6.5 19.5 L6.5 1.5 L16.5 1.5 L20.5 6 L20.5 19.5 Z" fill="#d0d0ff" stroke="#000" stroke-width="1"/>
<path d="M7.5 18.5 L7.5 2.5 L16 2.5" fill="none" stroke="#fff" stroke-width="1"/>
<path d="M16 2.2 L20 6.6" stroke="#fff" stroke-width="1"/>
<path d="M15.8 2.6 L20 7.2" stroke="#000" stroke-width="0.8" stroke-dasharray="1 0.9"/>
<path d="M1.5 9 L10.5 9 L10.5 5.5 L15.5 11 L10.5 16.5 L10.5 13 L1.5 13 Z" fill="#00c040" stroke="#000" stroke-width="1.3" stroke-linejoin="miter"/>
</svg>
</body></html>
